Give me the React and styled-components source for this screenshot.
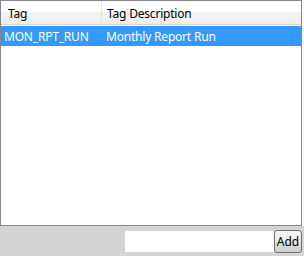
import React from "react";
import styled, { createGlobalStyle } from "styled-components";

const Global = createGlobalStyle`
  html, body { margin: 0; padding: 0; background: #ffffff; }
  body { font-family: "Noto Sans", "Open Sans", sans-serif; font-size: 12px; letter-spacing: -0.2px; }
`;

const Frame = styled.div`
  width: 304px;
  height: 256px;
  display: flex;
  flex-direction: column;
  background: #ffffff;
`;

const ListBox = styled.div`
  width: 302px;
  height: 226px;
  box-sizing: border-box;
  border: 1px solid #828790;
  background: #ffffff;
  display: flex;
  flex-direction: column;
`;

const HeaderRow = styled.div`
  display: grid;
  grid-template-columns: 101px 1fr;
  height: 24px;
  box-sizing: border-box;
  border-bottom: 1px solid #d5d5d5;
  background: linear-gradient(#ffffff 0%, #ffffff 45%, #f3f3f3 50%, #eeeeee 100%);
`;

const HeaderCell = styled.div`
  display: flex;
  align-items: center;
  padding-left: ${(p) => p.$pad}px;
  padding-top: 2px;
  color: #000;
  border-right: ${(p) => (p.$sep ? "1px solid #e3e3e3" : "none")};
  white-space: nowrap;
`;

const Row = styled.div`
  display: grid;
  grid-template-columns: 101px 1fr;
  height: 20px;
  margin-top: 1px;
  background: ${(p) => (p.$selected ? "#3399ff" : "transparent")};
  color: ${(p) => (p.$selected ? "#ffffff" : "#000000")};
`;

const Cell = styled.div`
  display: flex;
  align-items: center;
  padding-left: ${(p) => p.$pad}px;
  white-space: nowrap;
`;

const Footer = styled.div`
  flex: 1;
  background: #d4d4d4;
  display: flex;
  align-items: center;
  justify-content: flex-end;
  padding-right: 2px;
`;

const TextInput = styled.input`
  width: 149px;
  height: 21px;
  box-sizing: border-box;
  border: none;
  background: #ffffff;
  padding: 0 3px;
  font: inherit;
  outline: none;
`;

const AddButton = styled.button`
  width: 28px;
  height: 23px;
  box-sizing: border-box;
  border: 1px solid #707070;
  border-radius: 3px;
  background: linear-gradient(#f6f6f6 0%, #eaeaea 50%, #dddddd 51%, #cfcfcf 100%);
  font: inherit;
  font-size: 12px;
  color: #000;
  padding: 0;
  display: flex;
  align-items: center;
  justify-content: center;
`;

export default function App() {
  return (
    <>
      <Global />
      <Frame>
        <ListBox>
          <HeaderRow>
            <HeaderCell $pad={7} $sep>Tag</HeaderCell>
            <HeaderCell $pad={5}>Tag Description</HeaderCell>
          </HeaderRow>
          <Row $selected>
            <Cell $pad={3}>MON_RPT_RUN</Cell>
            <Cell $pad={4}>Monthly Report Run</Cell>
          </Row>
        </ListBox>
        <Footer>
          <TextInput defaultValue="" />
          <AddButton>Add</AddButton>
        </Footer>
      </Frame>
    </>
  );
}
